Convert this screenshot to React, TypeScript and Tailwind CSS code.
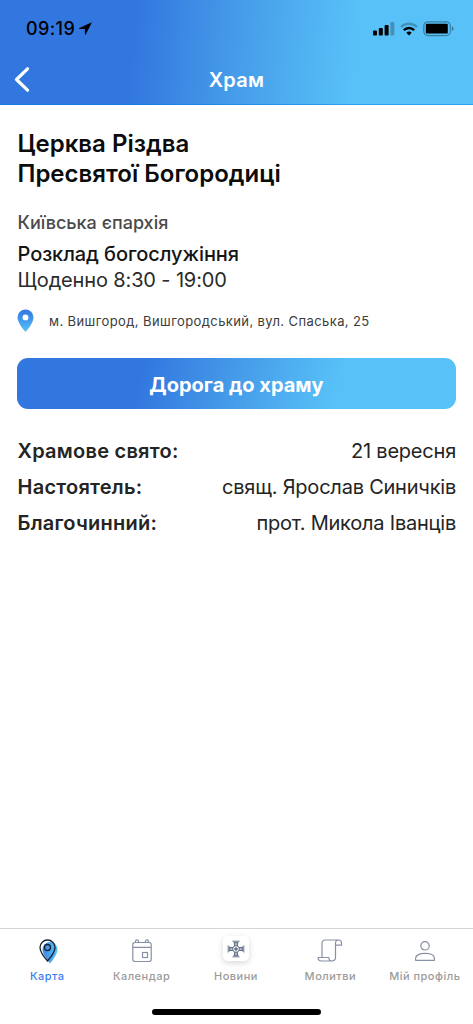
import React from 'react';
import { clsx } from 'clsx';

const details = [
  { label: 'Храмове свято:', value: '21 вересня' },
  { label: 'Настоятель:', value: 'свящ. Ярослав Синичків' },
  { label: 'Благочинний:', value: 'прот. Микола Іванців' }
];

function StatusBar() {
  return (
    <div className="flex h-[57px] items-center justify-between pl-[26px] pr-[19px]">
      <div className="flex items-center gap-[4px] text-black">
        <span className="text-[18px] font-medium leading-[22px] tracking-[0.4px]">09:19</span>
        <svg width="13" height="13" viewBox="0 0 13 13" fill="currentColor">
          <path d="M12.3.5.4 6.1c-.4.2-.3.8.2.8h5.3v5.4c0 .5.6.6.8.2L12.6.9c.1-.3-.1-.5-.3-.4z" />
        </svg>
      </div>
      <div className="flex items-center gap-[5px]">
        <svg width="22" height="14" viewBox="0 0 22 14">
          <rect x="0" y="8.5" width="4" height="5" rx="1" />
          <rect x="5.8" y="6" width="4" height="7.5" rx="1" />
          <rect x="11.6" y="3" width="4" height="10.5" rx="1" />
          <rect x="17.4" y="0" width="4" height="13.5" rx="1" fillOpacity=".25" />
        </svg>
        <svg width="18" height="14" viewBox="0 0 18 14" fill="none" stroke="#000" strokeWidth="2.4">
          <path d="M1 5C5.500.6 12.500.6 17 5" strokeOpacity=".25" />
          <path d="M3.800 8.100c3-2.900 7.400-2.900 10.400 0" />
          <path d="M6.300 10.700c1.600-1.500 3.800-1.500 5.400 0L9 13.500z" fill="#000" stroke="none" />
        </svg>
        <svg width="31" height="16" viewBox="0 0 31 16">
          <rect x=".8" y=".8" width="26.500" height="13.800" rx="4" fill="none" stroke="#000" strokeOpacity=".35" strokeWidth="1.200" />
          <rect x="2.800" y="2.800" width="22" height="9.800" rx="1.200" />
          <path d="M28.800 5.300c2.200.8 2.200 4 0 4.800z" fillOpacity=".4" />
        </svg>
      </div>
    </div>
  );
}

function Header() {
  return (
    <header className="h-[105px] border-b border-[#0080e8]/50 bg-[linear-gradient(95deg,#3276df_0%,#3276df_28%,#469ce9_50%,#58c2f8_75%,#58c2f8_100%)]">
      <StatusBar />
      <div className="grid h-[45px] grid-cols-[60px_1fr_60px] items-center text-white">
        <button className="pl-[13px]" aria-label="Назад">
          <svg width="18" height="25" viewBox="0 0 18 25" fill="none" stroke="currentColor" strokeWidth="3.200" strokeLinecap="round" strokeLinejoin="round">
            <path d="M14.500 1.800 3.500 12.500l11 10.700" />
          </svg>
        </button>
        <h1 className="text-center text-[20px] font-semibold leading-[24px] tracking-[0.3px]">Храм</h1>
      </div>
    </header>
  );
}

function PinIcon() {
  return (
    <svg width="17" height="24" viewBox="0 0 17 24">
      <defs>
        <linearGradient id="pin" x1="0" y1="0" x2="0" y2="1">
          <stop offset="0" stopColor="#3276df" />
          <stop offset="1" stopColor="#58c2f8" />
        </linearGradient>
      </defs>
      <path fill="url(#pin)" fillRule="evenodd" d="M8.500.5A8 8 0 0 0 .5 8.500c0 5.800 8 14.500 8 14.500s8-8.700 8-14.500a8 8 0 0 0-8-8zm0 5a2.900 2.900 0 1 1 0 5.800 2.900 2.900 0 0 1 0-5.800z" />
    </svg>
  );
}

function MapIcon() {
  return (
    <svg width="20" height="26" viewBox="0 0 20 26" className="ml-[3px] mt-px">
      <defs>
        <linearGradient id="map" x1="0" y1="0" x2="1" y2="0">
          <stop offset="0" stopColor="#3b86e2" />
          <stop offset="1" stopColor="#58c2f8" />
        </linearGradient>
      </defs>
      <path fill="url(#map)" d="M11 3a7.500 7.500 0 0 0-7.500 7.500c0 5.500 7.500 13.800 7.500 13.800s7.500-8.300 7.500-13.800A7.500 7.500 0 0 0 11 3z" />
      <g fill="none" stroke="#17212f" strokeWidth="1.300">
        <path d="M8.500 1A7.500 7.500 0 0 0 1 8.500C1 13.500 8.500 22 8.500 22S16 13.500 16 8.500A7.500 7.500 0 0 0 8.500 1z" />
        <circle cx="8.500" cy="8.500" r="3" />
      </g>
    </svg>
  );
}

function CalendarIcon() {
  return (
    <svg width="20" height="24" viewBox="0 0 20 24" fill="none" stroke="#8790a4" strokeWidth="1.200">
      <path d="M3 3.500h14A2.200 2.200 0 0 1 19.200 6v14.300a2.200 2.200 0 0 1-2.200 2.200H3A2.200 2.200 0 0 1 .8 20.300V6A2.200 2.200 0 0 1 3 3.500zM.8 8.400h18.400" />
      <path d="M3.500 3.500V2.300a1.500 1.500 0 0 1 3 0v1.200M13.500 3.500V2.300a1.500 1.500 0 0 1 3 0v1.200" />
      <rect x="10.500" y="13.500" width="5" height="5" />
    </svg>
  );
}

function CrossIcon() {
  return (
    <div className="mb-[5px] flex h-[25px] w-[26px] items-center justify-center rounded-[5px] bg-white shadow-[0_2px_6px_rgba(0,0,0,0.16)]">
      <svg width="18" height="18" viewBox="0 0 18 18" fill="none" stroke="#667389" strokeWidth="1">
        <path d="M5.500 1.200h7M6.500 2.700h5M7.500 2v4M10.500 2v4M9 2v4M5.500 16.800h7M6.500 15.300h5M7.500 12v4M10.500 12v4M9 12v4M1.200 5.500v7M2.700 6.500v5M2 7.500h4M2 10.500h4M2 9h4M16.800 5.500v7M15.300 6.500v5M12 7.500h4M12 10.500h4M12 9h4" />
        <circle cx="9" cy="9" r="3.300" />
        <circle cx="9" cy="9" r="1.300" fill="#667389" />
      </svg>
    </div>
  );
}

function ScrollIcon() {
  return (
    <svg width="26" height="24" viewBox="0 0 26 24" fill="none" stroke="#8790a4" strokeWidth="1.200" strokeLinejoin="round">
      <path d="M5 18.500V4.200A3.200 3.200 0 0 1 8.200 1h13.300c-2 0-3 1.400-3 3.200v14.500a3.300 3.300 0 0 1-3.300 3.300H4.500C2.600 22 1 20.800 1 18.500h10.800c0 2.200 1.300 3.500 3.200 3.500" />
      <path d="M21.500 1c1.800 0 3 1.200 3 3v2.200h-6" />
    </svg>
  );
}

function ProfileIcon() {
  return (
    <svg width="22" height="22" viewBox="0 0 22 22" fill="none" stroke="#8790a4" strokeWidth="1.200" className="ml-px">
      <circle cx="11" cy="5.800" r="4.200" />
      <path d="M1.600 20.300v-2c0-3.200 4.200-5 9.400-5s9.400 1.800 9.400 5v2z" strokeLinejoin="round" />
    </svg>
  );
}

const tabs = [
  { label: 'Карта', icon: <MapIcon /> },
  { label: 'Календар', icon: <CalendarIcon /> },
  { label: 'Новини', icon: <CrossIcon /> },
  { label: 'Молитви', icon: <ScrollIcon /> },
  { label: 'Мій профіль', icon: <ProfileIcon /> }
];

function TabBar() {
  return (
    <nav className="flex h-[96px] flex-col border-t border-[#d4d4d4] bg-white">
      <div className="grid w-[472px] grid-cols-5 pt-[7px]">
        {tabs.map((tab, i) =>
          <button key={tab.label} className="flex flex-col items-center whitespace-nowrap">
            <span className="flex h-[30px] items-center justify-center">{tab.icon}</span>
            <span
              className={clsx(
                'mt-[3px] text-[11px] font-medium leading-[14px] tracking-[0.5px]',
                i === 0 ? 'text-[#3c7df0]' : 'text-[#9b9b9b]'
              )}>
              {tab.label}
            </span>
          </button>
        )}
      </div>
      <div className="mx-auto mb-[9px] mt-auto h-[6px] w-[169px] rounded-full bg-black" />
    </nav>
  );
}

export default function App() {
  return (
    <div className="flex h-[1024px] w-[473px] flex-col overflow-hidden bg-white font-['Inter',sans-serif]">
      <Header />
      <main className="flex-1 px-[17px] pt-[24px]">
        <h2 className="whitespace-nowrap pl-[0.5px] text-[24px] font-semibold leading-[30px] text-[#0c0c0c]">
          Церква Різдва
          <br />
          Пресвятої Богородиці
        </h2>
        <p className="mt-[21px] pl-[0.5px] text-[18px] font-medium leading-[26px] text-[#4a4a4a]">Київська єпархія</p>
        <p className="mt-[5px] pl-[0.5px] text-[20px] font-medium leading-[26px] tracking-[-0.08px] text-[#151515]">Розклад богослужіння</p>
        <p className="pl-[0.5px] text-[20px] leading-[27px] tracking-[-0.14px] text-[#2b2b2b]">Щоденно 8:30 - 19:00</p>
        <div className="mt-[14px] flex h-[26px] items-center gap-[15px]">
          <PinIcon />
          <span className="whitespace-nowrap pt-[2px] text-[13px] tracking-[0.4px] text-[#3c3c3c]">
            м. Вишгород, Вишгородський, вул. Спаська, 25
          </span>
        </div>
        <button className="mt-[24px] flex h-[51px] w-full items-center justify-center rounded-[11px] bg-[linear-gradient(105deg,#3276df_0%,#3276df_28%,#469ce9_50%,#58c2f8_73%,#58c2f8_100%)] pt-[2px] text-[20px] font-bold text-white">
          Дорога до храму
        </button>
        <dl className="mt-[24px] text-[20px] leading-[36px] text-[#242424]">
          {details.map((row) =>
            <div key={row.label} className="flex justify-between whitespace-nowrap">
              <dt className="pl-[0.5px] font-semibold tracking-[0.25px]">{row.label}</dt>
              <dd className="tracking-[-0.22px]">{row.value}</dd>
            </div>
          )}
        </dl>
      </main>
      <TabBar />
    </div>
  );
}
